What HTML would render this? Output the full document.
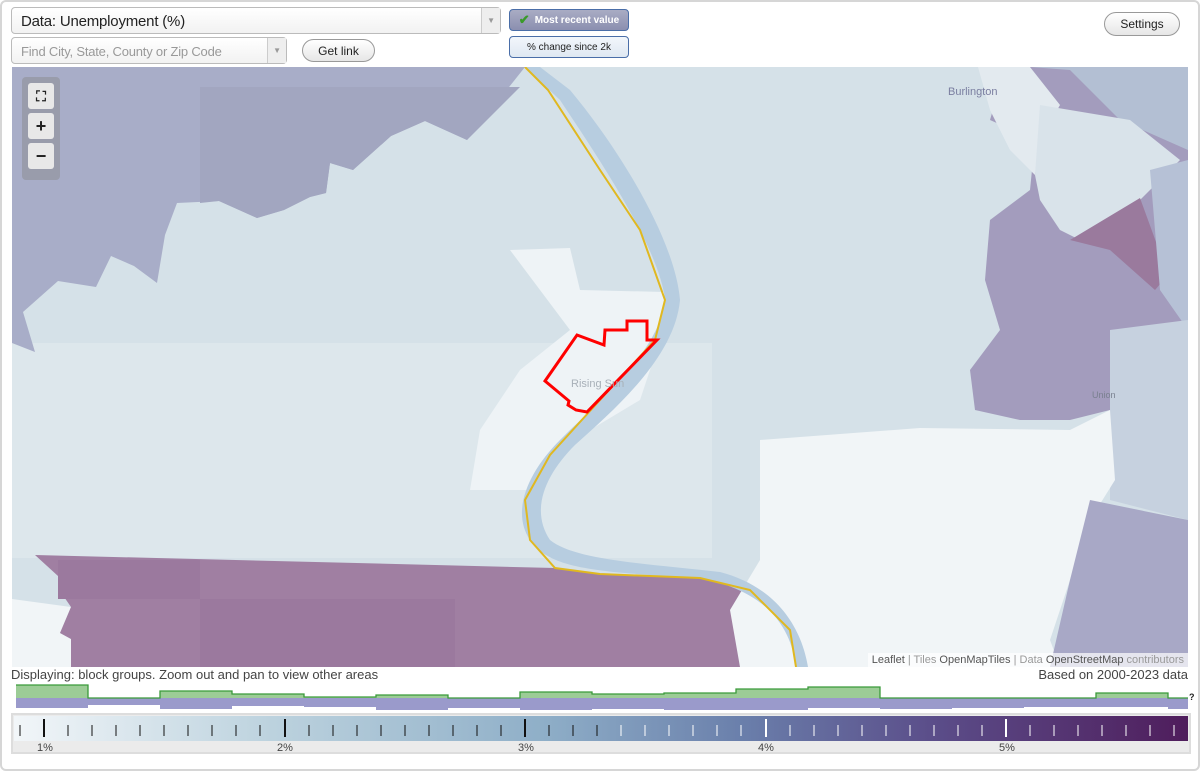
<!DOCTYPE html>
<html><head><meta charset="utf-8"><style>
body{margin:0;width:1200px;height:771px;background:#fff;font-family:"Liberation Sans",Arial,sans-serif;overflow:hidden;position:relative}
.frame{position:absolute;left:0;top:0;width:1196px;height:767px;border:2px solid #d6d6d6;border-radius:6px}
.sel{position:absolute;background:linear-gradient(#fff,#f2f2f2);border:1px solid #bbb;border-radius:4px;box-sizing:border-box}
.arr{position:absolute;right:0;top:0;bottom:0;width:18px;border-left:1px solid #ccc;background:#eee;color:#999;font-size:8px;display:flex;align-items:center;justify-content:center}
.btn{position:absolute;border:1px solid #999;border-radius:12px;background:linear-gradient(#fff,#e6e6e6);font-size:12px;color:#222;display:flex;align-items:center;justify-content:center;box-sizing:border-box}
.tg{position:absolute;left:509px;width:120px;border:1px solid #4a6ea8;border-radius:4px;box-sizing:border-box;font-size:10px;display:flex;align-items:center;justify-content:center}
.zc{position:absolute;left:28px;width:26px;height:26px;background:#e8e8e8;border-radius:3px;display:flex;align-items:center;justify-content:center;font-weight:bold;font-size:18px;color:#222}
</style></head><body>
<div class="frame"></div>
<div class="sel" style="left:11px;top:7px;width:490px;height:27px;font-size:15px;color:#222;padding:5px 9px;letter-spacing:-0.2px">Data: Unemployment (%)<div class="arr">▼</div></div>
<div class="sel" style="left:11px;top:37px;width:276px;height:27px;font-size:13px;color:#999;padding:6px 9px;letter-spacing:-0.2px">Find City, State, County or Zip Code<div class="arr">▼</div></div>
<div class="btn" style="left:302px;top:39px;width:73px;height:23px">Get link</div>
<div class="tg" style="top:9px;height:22px;background:linear-gradient(#a9acc4,#8b8fb0);color:#fff;font-weight:bold"><span style="color:#3a9a2a;font-size:13px;margin-right:5px">✔</span>Most recent value</div>
<div class="tg" style="top:36px;height:22px;background:linear-gradient(#f2f6fb,#dfe8f2);color:#222">% change since 2k</div>
<div class="btn" style="left:1104px;top:12px;width:76px;height:24px">Settings</div>

<svg style="position:absolute;left:0;top:0" width="1200" height="771">
<defs><clipPath id="c"><rect x="12" y="67" width="1176" height="600"/></clipPath></defs>
<g clip-path="url(#c)">
<rect x="12" y="67" width="1176" height="600" fill="#d5e1e8"/>
<rect x="12" y="343" width="700" height="215" fill="#dde7ec"/>
<polygon points="12,67 525,67 467,140 425,121 391,136 353,170 330,163 326,193 310,197 284,210 257,218 219,201 177,203 165,235 157,283 134,266 111,256 96,287 58,281 23,312 35,352 12,343" fill="#a8adc8"/>
<polygon points="200,87 520,87 467,140 425,121 391,136 353,170 330,163 326,193 310,197 284,210 257,218 219,201 200,203" fill="#a2a6c0"/>
<polygon points="510,250 570,248 580,290 665,292 660,340 640,400 590,430 550,470 530,490 470,490 480,430 520,370 570,330" fill="#eef3f6"/>
<polygon points="12,599 71,607 60,633 71,639 71,667 12,667" fill="#f1f5f7"/>
<polygon points="35,555 555,568 600,574 700,578 750,586 790,630 796,667 71,667 71,639 60,633 71,607 60,591 58,576" fill="#a07fa2"/>
<polygon points="58,560 200,560 200,599 58,599" fill="#9b799e"/>
<polygon points="200,599 455,599 455,667 200,667" fill="#9b799e"/>
<polygon points="730,67 1020,67 1000,85 990,120 1035,140 1030,190 990,220 985,280 1000,330 970,370 975,410 1020,420 1070,420 1110,410 1188,400 1188,67" fill="#a39cbd"/>
<polygon points="978,67 1030,67 1060,105 1040,140 1035,175 1010,150 990,110" fill="#e3eaef"/>
<polygon points="1030,67 1188,67 1188,150 1120,120 1070,70" fill="#b3bfd3"/>
<polygon points="1040,105 1130,120 1180,160 1140,200 1080,240 1060,230 1040,200 1035,175" fill="#d9e3ea"/>
<polygon points="1070,240 1140,198 1168,275 1155,290 1110,250" fill="#9a7a9d"/>
<polygon points="1150,170 1188,160 1188,330 1160,290" fill="#b6c1d6"/>
<polygon points="1110,330 1188,320 1188,520 1110,500" fill="#c6d1df"/>
<polygon points="760,440 920,428 1070,430 1110,410 1115,480 1090,520 1070,580 1050,640 1060,667 740,667 730,610 760,560" fill="#f1f5f7"/>
<polygon points="1090,500 1188,520 1188,667 1050,667 1070,580" fill="#a8a8c6"/>
<path d="M525,67 L560,100 C600,160 660,250 665,300 C660,350 600,400 560,440 C530,470 510,510 530,540 C550,570 600,572 700,578 C760,590 790,620 796,667 L808,667 C800,620 770,585 720,572 C640,563 575,560 550,540 C530,510 545,475 575,445 C620,405 675,355 680,300 C675,240 620,150 570,90 L540,67 Z" fill="#b7cde0"/>
<path d="M525,67 L548,90 L600,170 L640,230 L665,300 L655,340 L600,400 L550,455 L525,500 L530,540 L555,568 L600,574 L700,578 L750,590 L790,630 L796,667" fill="none" stroke="#e0b820" stroke-width="2"/>
<polygon points="577,335 604,345 605,330 627,330 627,321 647,321 647,340 657,340 587,412 576,410 568,405 569,401 545,381" fill="none" stroke="#ff0000" stroke-width="3"/>
<text x="571" y="387" font-size="11" fill="#a8b0b8" font-family="Liberation Sans">Rising Sun</text>
<text x="948" y="95" font-size="11" fill="#7a7ea0" font-family="Liberation Sans">Burlington</text>
<text x="1092" y="398" font-size="9" fill="#7a8090" font-family="Liberation Sans">Union</text>
</g>
<rect x="22" y="77" width="38" height="103" rx="4" fill="#888" opacity=".45"/>
</svg>
<div class="zc" style="top:83px;font-size:14px">⛶</div>
<div class="zc" style="top:113px">+</div>
<div class="zc" style="top:143px">−</div>
<div style="position:absolute;left:868px;top:653px;width:320px;height:14px;background:rgba(255,255,255,.7);font-size:11px;color:#999;text-align:right;line-height:14px;padding-right:4px;box-sizing:border-box"><span style="color:#555">Leaflet</span> | Tiles <span style="color:#555">OpenMapTiles</span> | Data <span style="color:#555">OpenStreetMap</span> contributors</div>
<div style="position:absolute;left:11px;top:667px;font-size:13px;color:#444">Displaying: block groups. Zoom out and pan to view other areas</div>
<div style="position:absolute;right:12px;top:667px;font-size:13px;color:#444">Based on 2000-2023 data</div>
<svg style="position:absolute;left:0;top:680px" width="1200" height="34">
<path d="M16,18 H1188 V29 H1168 V27 H1096 V27 H1024 V28 H952 V29 H880 V28 H808 V30 H736 V30 H664 V29 H592 V30 H520 V28 H448 V30 H376 V27 H304 V26 H232 V29 H160 V25 H88 V28 H16 Z" fill="#9a9acb"/>
<path d="M16,5 H88 V18 H160 V11 H232 V14 H304 V17 H376 V15 H448 V18 H520 V12 H592 V14 H664 V13 H736 V9 H808 V7 H880 V18 H952 V18 H1024 V18 H1096 V13 H1168 V18 H1188 V18 H16 Z" fill="#9ccc96"/>
<path d="M16,5 H88 V18 H160 V11 H232 V14 H304 V17 H376 V15 H448 V18 H520 V12 H592 V14 H664 V13 H736 V9 H808 V7 H880 V18 H952 V18 H1024 V18 H1096 V13 H1168 V18 H1188" fill="none" stroke="#3a9a3a" stroke-width="1.3"/>
<text x="1189" y="20" font-size="9" font-weight="bold" fill="#222" font-family="Liberation Sans">?</text>
</svg>
<div style="position:absolute;left:11px;top:713px;width:1180px;height:41px;border:2px solid #ddd;box-sizing:border-box;background:#ebebeb">
<div style="position:absolute;left:1px;top:1px;right:1px;height:25px;background:linear-gradient(90deg,#f2f6f9 0%,#bcd2de 22%,#8fafc8 45%,#6a7fab 62%,#5b4e8a 78%,#4f1d5c 100%)"></div>
</div>
<svg style="position:absolute;left:0;top:713px" width="1200" height="41" font-family="Liberation Sans" font-size="11">
<path d="M20,12V23 M68,12V23 M92,12V23 M116,12V23 M140,12V23 M164,12V23 M188,12V23 M212,12V23 M236,12V23 M260,12V23 M309,12V23 M333,12V23 M357,12V23 M381,12V23 M405,12V23 M429,12V23 M453,12V23 M477,12V23 M501,12V23 M549,12V23 M573,12V23 M597,12V23" stroke="#111" stroke-width="1"/>
<path d="M44,6V24 M285,6V24 M525,6V24" stroke="#111" stroke-width="2"/>
<path d="M621,12V23 M645,12V23 M669,12V23 M693,12V23 M717,12V23 M741,12V23 M790,12V23 M814,12V23 M838,12V23 M862,12V23 M886,12V23 M910,12V23 M934,12V23 M958,12V23 M982,12V23 M1030,12V23 M1054,12V23 M1078,12V23 M1102,12V23 M1126,12V23 M1150,12V23 M1174,12V23" stroke="#fff" stroke-width="1"/>
<path d="M766,6V24 M1006,6V24" stroke="#fff" stroke-width="2"/>
<text x="37" y="38" fill="#444">1%</text><text x="277" y="38" fill="#444">2%</text><text x="518" y="38" fill="#444">3%</text><text x="758" y="38" fill="#444">4%</text><text x="999" y="38" fill="#444">5%</text>
</svg>
</body></html>
